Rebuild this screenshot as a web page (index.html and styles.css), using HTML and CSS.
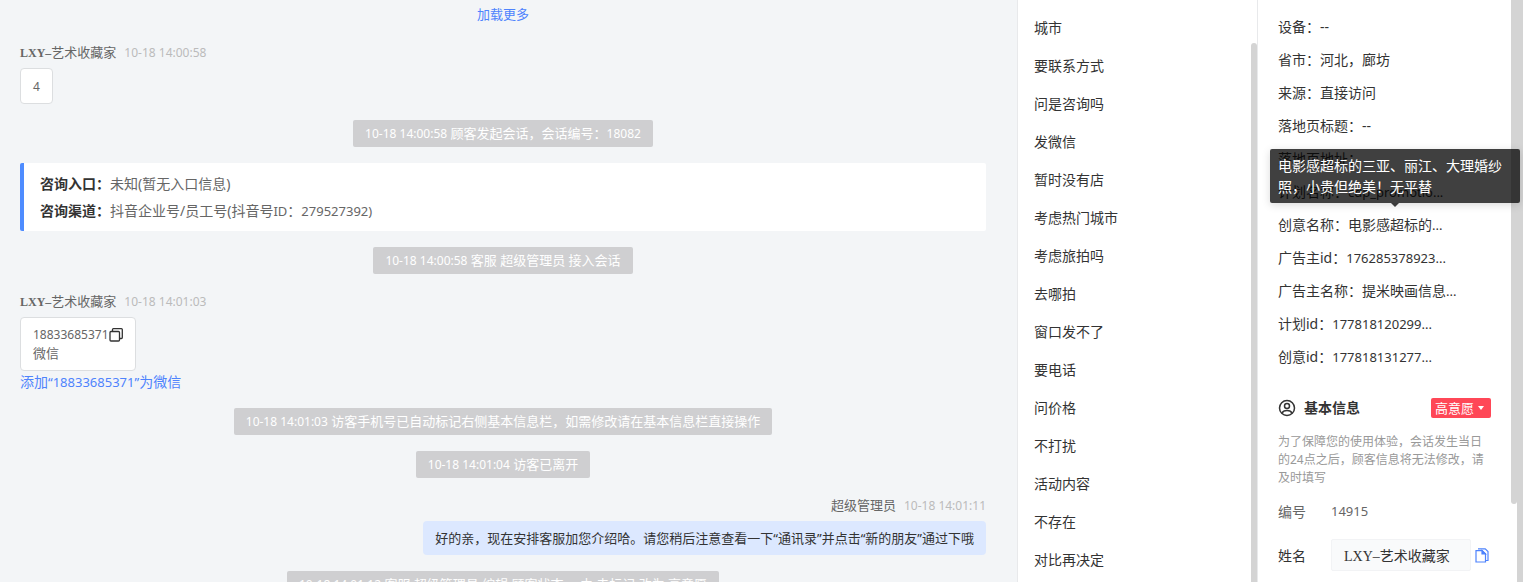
FILE: index.html
```html
<!DOCTYPE html>
<html lang="zh-CN">
<head>
    <meta charset="UTF-8">
    <meta name="viewport" content="width=device-width, initial-scale=1.0">
    <title>客服会话</title>
    <link rel="stylesheet" href="styles.css">
</head>
<body>

    <div class="layout">
        <!-- Chat history -->
        <main class="chat">
            <a class="load-more" href="#">加载更多</a>

            <div class="message">
                <div class="meta"><span class="name"><b>LXY–</b>艺术收藏家</span><time class="num">10-18 14:00:58</time></div>
                <div class="bubble"><span class="num">4</span></div>
            </div>

            <div class="notice"><span class="num">10-18 14:00:58</span> 顾客发起会话，会话编号：<span class="num">18082</span></div>

            <div class="source">
                <p><strong>咨询入口：</strong>未知(暂无入口信息)</p>
                <p><strong>咨询渠道：</strong>抖音企业号/员工号(抖音号<span class="num">ID</span>：<span class="num">279527392)</span></p>
            </div>

            <div class="notice"><span class="num">10-18 14:00:58</span> 客服 超级管理员 接入会话</div>

            <div class="message">
                <div class="meta"><span class="name"><b>LXY–</b>艺术收藏家</span><time class="num">10-18 14:01:03</time></div>
                <div class="bubble">
                    <span class="phone"><span class="num">18833685371</span><button class="icon-btn" aria-label="复制"><svg width="14" height="14" viewBox="0 0 14 14" fill="none" stroke="#333" stroke-width="1.3"><rect x="1" y="3.5" width="9.5" height="9.5" rx="1"/><path d="M3.5 3.5V1.6q0-.9.9-.9h8q.9 0 .9.9v8q0 .9-.9.9h-1.9"/></svg></button></span>
                    微信
                </div>
                <a class="add-wechat" href="#">添加<span class="num">“18833685371”</span>为微信</a>
            </div>

            <div class="notice"><span class="num">10-18 14:01:03</span> 访客手机号已自动标记右侧基本信息栏，如需修改请在基本信息栏直接操作</div>
            <div class="notice"><span class="num">10-18 14:01:04</span> 访客已离开</div>

            <div class="message mine">
                <div class="meta"><span class="name">超级管理员</span><time class="num">10-18 14:01:11</time></div>
                <div class="bubble">好的亲，现在安排客服加您介绍哈。请您稍后注意查看一下“通讯录”并点击“新的朋友”通过下哦</div>
            </div>

            <div class="notice"><span class="num">10-18 14:01:12</span> 客服 超级管理员 编辑 顾客状态 ，由 未标记 改为 高意愿</div>
        </main>

        <!-- Quick replies -->
        <aside class="replies">
            <ul>
                <li>城市</li>
                <li>要联系方式</li>
                <li>问是咨询吗</li>
                <li>发微信</li>
                <li>暂时没有店</li>
                <li>考虑热门城市</li>
                <li>考虑旅拍吗</li>
                <li>去哪拍</li>
                <li>窗口发不了</li>
                <li>要电话</li>
                <li>问价格</li>
                <li>不打扰</li>
                <li>活动内容</li>
                <li>不存在</li>
                <li>对比再决定</li>
            </ul>
            <div class="scrollbar"></div>
        </aside>

        <!-- Visitor details -->
        <aside class="details">
            <ul class="visitor">
                <li>设备：--</li>
                <li>省市：河北，廊坊</li>
                <li>来源：直接访问</li>
                <li>落地页标题：--</li>
                <li>落地页地址：</li>
                <li>计划名称：<span class="num">cdp_promotio...</span></li>
                <li class="has-tip">创意名称：电影感超标的<span class="num">...</span>
                    <div class="tooltip" role="tooltip">电影感超标的三亚、丽江、大理婚纱照，小贵但绝美！无平替</div>
                </li>
                <li>广告主id：<span class="num">176285378923...</span></li>
                <li>广告主名称：提米映画信息<span class="num">...</span></li>
                <li>计划id：<span class="num">177818120299...</span></li>
                <li>创意id：<span class="num">177818131277...</span></li>
            </ul>

            <div class="section-head">
                <svg width="18" height="18" viewBox="0 0 18 18" fill="none" stroke="#333" stroke-width="1.5"><circle cx="9" cy="9" r="7.5"/><circle cx="9" cy="7" r="2.5"/><path d="M4 14.2c.8-2 2.6-2.7 5-2.7s4.2.7 5 2.7"/></svg>
                <h2>基本信息</h2>
                <button class="tag">高意愿<span class="caret"></span></button>
            </div>
            <p class="hint">为了保障您的使用体验，会话发生当日的24点之后，顾客信息将无法修改，请及时填写</p>

            <div class="field">
                <span class="field-label">编号</span>
                <span class="field-value num">14915</span>
            </div>
            <div class="field field-name">
                <label class="field-label" for="name">姓名</label>
                <input type="text" id="name" value="LXY–艺术收藏家">
                <button class="icon-btn" aria-label="复制姓名"><svg width="14" height="15" viewBox="0 0 14 15" fill="none" stroke="#4e83fd" stroke-width="1.2"><path d="M1 2.6h6.2l3.3 3.4v8H1z"/><path d="M3 .8h7.200L13 3.600v8.900h-2.500"/><path d="M7 2.600V6h3.500z" fill="#4e83fd"/></svg></button>
            </div>
            <div class="scrollbar"></div>
            <div class="scrollbar outer"></div>
        </aside>
    </div>

</body>
</html>
```
FILE: styles.css
```css
* {
    box-sizing: border-box;
}
body {
    margin: 0;
    font-family: "Noto Sans", "Noto Sans CJK SC", sans-serif;
    font-size: 14px;
    color: #333;
    background: #fff;
}
ul, p, h2 {
    margin: 0;
    padding: 0;
    list-style: none;
}
a {
    color: #4e83fd;
    text-decoration: none;
}
button {
    padding: 0;
    border: none;
    background: none;
    font: inherit;
    cursor: pointer;
}
.num {
    font-size: 13px;
    line-height: 1;
}
.layout {
    display: grid;
    grid-template-columns: 1fr 240px 266px;
    height: 100vh;
    overflow: hidden;
}

/* Chat */
.chat {
    display: flex;
    flex-direction: column;
    align-items: center;
    gap: 16px;
    padding: 3px 31px 0 20px;
    background: #f3f5f7;
    font-size: 13px;
    line-height: 18px;
    overflow: hidden;
}
.chat > * {
    flex-shrink: 0;
}
.chat .num {
    font-size: 12px;
}
.load-more {
    line-height: 22px;
}
.message {
    align-self: stretch;
    display: flex;
    flex-direction: column;
    align-items: flex-start;
}
.meta {
    display: flex;
    align-items: baseline;
    gap: 8px;
    height: 22px;
    margin-bottom: 5px;
    line-height: 22px;
    color: #666;
}
.meta b {
    font-family: "Liberation Serif", serif;
    font-size: 12px;
    line-height: 1;
}
.meta time {
    color: #bbb;
}
.bubble {
    padding: 8px 12px;
    border: 1px solid #dcdee0;
    border-radius: 4px;
    background: #fff;
    color: #666;
}
.phone {
    display: flex;
    align-items: center;
    height: 18px;
}
.icon-btn {
    display: flex;
}
.chat .add-wechat {
    font-size: 14px;
    line-height: 21px;
}
.chat .add-wechat .num {
    font-size: 13px;
}
.mine {
    align-items: flex-end;
}
.mine .bubble {
    border: none;
    background: #dce8ff;
    color: #333;
}
.notice {
    padding: 5px 12px;
    border-radius: 2px;
    background: #cfcfd1;
    color: #fff;
    line-height: 17px;
}
.source {
    align-self: stretch;
    padding: 7px 16px;
    border-left: 4px solid #4e8cff;
    border-radius: 2px;
    background: #fff;
    font-size: 14px;
    line-height: 27px;
    color: #666;
}
.source strong {
    color: #333;
}
.source .num {
    font-size: 13px;
}

/* Quick replies */
.replies {
    position: relative;
    padding: 9px 16px;
    border-left: 1px solid #e8e9eb;
    overflow: hidden;
}
.replies li {
    line-height: 38px;
}
.scrollbar {
    position: absolute;
    top: 43px;
    right: 0;
    bottom: 0;
    width: 6px;
    border-radius: 3px 3px 0 0;
    background: #d4d4d4;
}

/* Visitor details */
.details {
    position: relative;
    padding: 10px 32px 0 20px;
    border-left: 1px solid #e8e9eb;
}
.visitor li {
    line-height: 33px;
    white-space: nowrap;
}
.visitor .num {
    line-height: 1;
}
.has-tip {
    position: relative;
}
.tooltip {
    position: absolute;
    bottom: 38px;
    left: -8px;
    z-index: 2;
    width: 250px;
    padding: 6px 8px;
    border-radius: 2px;
    background: rgba(0, 0, 0, 0.75);
    box-shadow: 0 2px 8px rgba(0, 0, 0, 0.15);
    color: #fff;
    line-height: 21px;
    white-space: normal;
}
.tooltip::after {
    content: "";
    position: absolute;
    top: 100%;
    left: 50%;
    margin-left: -4px;
    border: 4px solid transparent;
    border-top-color: rgba(0, 0, 0, 0.75);
    border-bottom: none;
}
.section-head {
    display: flex;
    align-items: center;
    gap: 8px;
    margin-top: 24px;
    line-height: 22px;
}
.section-head h2 {
    font-size: 14px;
}
.tag {
    display: flex;
    align-items: center;
    gap: 4px;
    height: 20px;
    margin-left: auto;
    padding: 0 7px 0 4px;
    border-radius: 2px;
    background: #ff4757;
    color: #fff;
    font-size: 13px;
}
.caret {
    border: 3px solid transparent;
    border-top: 4px solid #fff;
    border-bottom: none;
}
.hint {
    margin: 14px 0 8px;
    font-size: 12px;
    line-height: 18px;
    color: #999;
}
.field {
    display: flex;
    align-items: center;
    height: 32px;
    margin-bottom: 12px;
    color: #666;
}
.field-label {
    width: 53px;
    flex-shrink: 0;
}
.field-name {
    color: #333;
}
.field input {
    flex: 1;
    min-width: 0;
    height: 32px;
    padding: 0 12px;
    border: 1px solid #f2f3f5;
    border-radius: 2px;
    background: #f9fafb;
    color: #333;
    font-family: "Liberation Serif", "Noto Sans CJK SC", serif;
    font-size: 14px;
}
.field .icon-btn {
    margin: 0 2px 0 4px;
}
.details .scrollbar {
    top: 0;
    right: 6px;
    bottom: 79px;
    border-radius: 0 0 3px 3px;
}
.details .scrollbar.outer {
    right: 0;
    bottom: 0;
    border-radius: 0;
}
```
